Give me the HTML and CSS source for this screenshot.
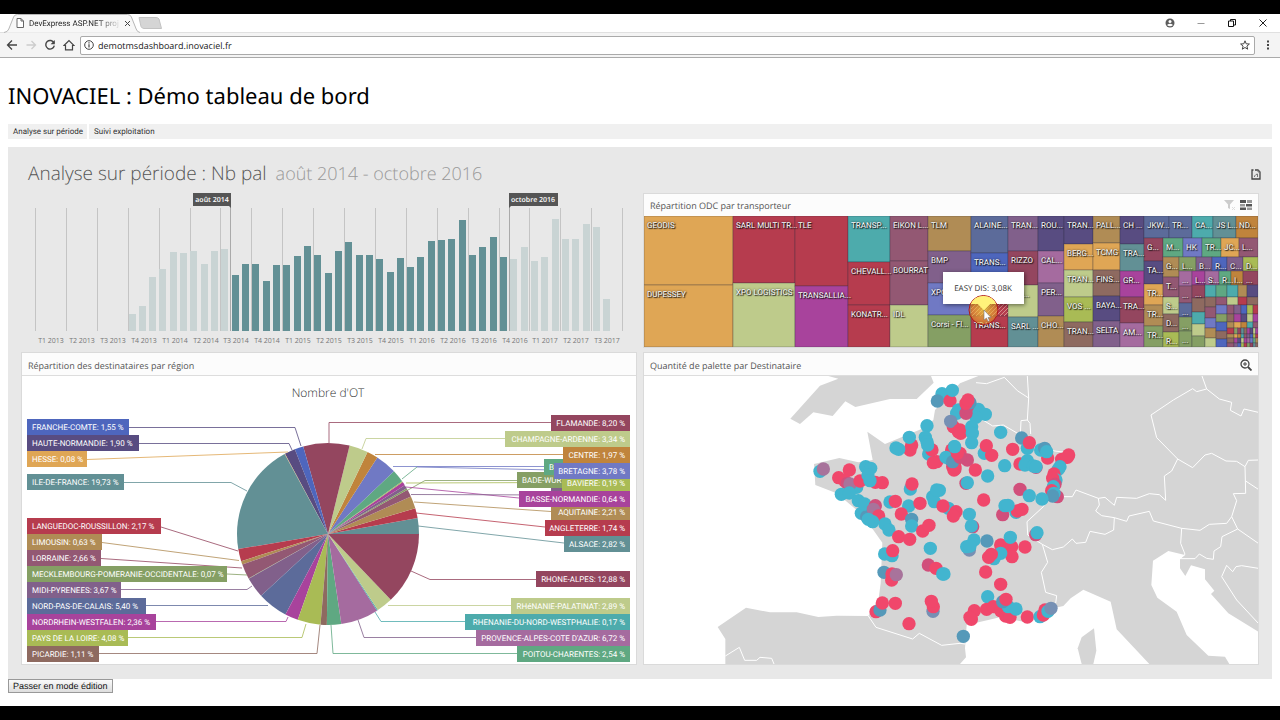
FILE: index.html
```html
<!DOCTYPE html>
<html lang="fr">
<head>
<meta charset="utf-8">
<title>DevExpress ASP.NET project</title>
<link rel="stylesheet" href="styles.css">
</head>
<body>
<header class="browser">
  <div class="tab-strip">
    <div class="tab">
      <svg class="tab-shape" viewBox="0 0 142 19" preserveAspectRatio="none" aria-hidden="true"><path d="M0 18.500 Q4 18 5 15L10 3Q11 .5 14 .5H129Q132 .5 133 3L138 15Q139 18 142 18.500" fill="#f7f7f7" stroke="#b4b4b4"/></svg>
      <svg class="icon-page" viewBox="0 0 8 10" aria-hidden="true"><path d="M1 .5H5L7.500 3V9.500H1ZM5 .5V3H7.500" fill="#fff" stroke="#666"/></svg>
      <span class="tab-title">DevExpress ASP.NET proj</span>
      <button class="tab-close" aria-label="Fermer l'onglet"><svg viewBox="0 0 7 7"><path d="M1 1L6 6M6 1L1 6" stroke="#444"/></svg></button>
    </div>
    <svg class="new-tab" viewBox="0 0 24 12" aria-hidden="true"><path d="M1 .5H18Q20 .5 21 2L23.500 11.500H6Q4 11.500 3 9.500Z" fill="#d5d5d5" stroke="#c2c2c2"/></svg>
    <div class="window-buttons">
      <button aria-label="Profil"><svg viewBox="0 0 10 10"><circle cx="5" cy="5" r="4.500" fill="#5c5c5c"/><circle cx="5" cy="3.500" r="1.500" fill="#fff"/><path d="M2 7Q5 4.600 8 7Q5 9.600 2 7" fill="#fff"/></svg></button>
      <button aria-label="Réduire"><svg viewBox="0 0 10 10"><path d="M1.500 5.500H8.500" stroke="#999"/></svg></button>
      <button aria-label="Restaurer"><svg viewBox="0 0 10 10"><path d="M1.500 3H6.500V8.500H1.500ZM3.500 3V1.500H8.500V7H6.500" fill="none" stroke="#111"/></svg></button>
      <button aria-label="Fermer"><svg viewBox="0 0 10 10"><path d="M1.500 1.500L8.500 8.500M8.500 1.500L1.500 8.500" stroke="#222"/></svg></button>
    </div>
  </div>
  <div class="toolbar">
    <button aria-label="Précédent"><svg viewBox="0 0 12 12"><path d="M11 6H2M6 1.500L1.500 6L6 10.500" fill="none" stroke="#444" stroke-width="1.300"/></svg></button>
    <button aria-label="Suivant"><svg viewBox="0 0 12 12"><path d="M1.500 6H10M6.500 2L10.500 6L6.500 10" fill="none" stroke="#ccc" stroke-width="1.300"/></svg></button>
    <button aria-label="Actualiser"><svg viewBox="0 0 12 12"><path d="M10 4A4.300 4.300 0 1 0 10.300 6.600" fill="none" stroke="#444" stroke-width="1.400"/><path d="M10.800 1V5.200H6.600Z" fill="#444"/></svg></button>
    <button aria-label="Accueil"><svg viewBox="0 0 12 12"><path d="M1 6.500L6 1.500L11 6.500H9.500V10.800H2.500V6.500Z" fill="none" stroke="#444" stroke-width="1.200"/></svg></button>
    <div class="address">
      <svg viewBox="0 0 10 10" aria-hidden="true"><circle cx="5" cy="5" r="4.300" fill="none" stroke="#444"/><path d="M5 4.300V7.600M5 2.300V3.400" stroke="#444" stroke-width="1.200"/></svg>
      <input type="text" aria-label="Adresse" value="demotmsdashboard.inovaciel.fr">
      <svg viewBox="0 0 10 10" aria-hidden="true"><path d="M5 .8L6.200 3.800L9.400 4L6.900 6.100L7.700 9.200L5 7.500L2.300 9.200L3.100 6.100L.6 4L3.800 3.800Z" fill="none" stroke="#444"/></svg>
    </div>
    <button aria-label="Menu"><svg viewBox="0 0 12 12"><path d="M5 1.500H7V3.500H5ZM5 5H7V7H5ZM5 8.500H7V10.500H5Z" fill="#444"/></svg></button>
  </div>
</header>
<main class="page">
  <h1>INOVACIEL : Démo tableau de bord</h1>
  <nav class="tabs"><button>Analyse sur période</button><button>Suivi exploitation</button></nav>
  <section class="dashboard">
    <div class="dash-title">
      <h2>Analyse sur période : Nb pal <span>août 2014 - octobre 2016</span></h2>
      <button aria-label="Exporter"><svg viewBox="0 0 10 11"><path d="M2.500 1H1V10H9V3L7 1H4" fill="none" stroke="#444" stroke-width="1.300"/><path d="M7 1V3H9M3.500 8V7L5 5.500L6.500 5V8" fill="none" stroke="#777"/></svg></button>
    </div>
    <div class="grid">
      <svg class="range chart" id="range" viewBox="22 194 614 153" role="img" aria-label="Nb pal par mois"></svg>
      <article class="panel">
        <header><h3>Répartition ODC par transporteur</h3>
          <button aria-label="Effacer le filtre"><svg viewBox="0 0 12 12"><path d="M0 1H10L6 5.500V10L4 9V5.500Z" fill="#ccc"/><path d="M8 8L11 11M11 8L8 11" stroke="#ddd"/></svg></button>
          <button aria-label="Sélection"><svg viewBox="0 0 12 12"><path d="M0 1H6V4H0ZM6 5H12V7.500H6ZM0 8.500H6V11H0Z" fill="#555"/><path d="M7 1H12V4H7ZM0 5H5V7.500H0ZM7 8.500H12V11H7Z" fill="#999"/></svg></button>
        </header>
        <svg class="chart treemap" id="treemap" viewBox="644 216 614 131" role="img" aria-label="Répartition ODC par transporteur"></svg>
      </article>
      <article class="panel">
        <header class="lined"><h3>Répartition des destinataires par région</h3></header>
        <svg class="chart pie" id="pie" viewBox="22 376 614 288" role="img" aria-label="Nombre d'OT par région"></svg>
      </article>
      <article class="panel">
        <header class="lined"><h3>Quantité de palette par Destinataire</h3>
          <button aria-label="Zoom initial"><svg viewBox="0 0 12 12"><circle cx="5" cy="5" r="4" fill="none" stroke="#444" stroke-width="1.300"/><path d="M8 8L11.500 11.500" stroke="#444" stroke-width="1.800"/><path d="M3 5H7M5 3V7" stroke="#444"/></svg></button>
        </header>
        <svg class="chart map" id="map" viewBox="12 78 1842 864" role="img" aria-label="Carte des destinataires"></svg>
      </article>
    </div>
  </section>
  <button class="edit-mode">Passer en mode édition</button>
</main>
<script src="charts.js"></script>
</body>
</html>
```

FILE: styles.css
```css
* { box-sizing: border-box; }
body {
  margin: 0;
  min-height: 100vh;
  display: flex;
  flex-direction: column;
  padding: 14px 0;
  background: #000;
  color: #333;
  font-family: "Open Sans", "Noto Sans", sans-serif;
  font-size: 8px;
  text-rendering: geometricPrecision;
}
button { font: inherit; color: inherit; border: 0; background: none; padding: 0; text-rendering: inherit; }
svg { display: block; flex: none; }
h1, h2, h3 { margin: 0; font-weight: 400; }

.browser { background: #fff; }
.tab-strip { display: flex; align-items: center; height: 19px; padding-left: 4px; border-bottom: 1px solid #e0e0e0; }
.tab { position: relative; display: flex; align-items: center; width: 136px; height: 19px; padding: 0 10px 0 12px; gap: 5px; font-family: Roboto, "Open Sans", sans-serif; }
.tab-shape { position: absolute; inset: 0; width: 100%; height: 100%; }
.icon-page { position: relative; width: 8px; height: 10px; }
.tab-title {
  position: relative; flex: 1; white-space: nowrap;
  background: linear-gradient(to right, #222 75%, #ddd);
  -webkit-background-clip: text; background-clip: text; color: transparent;
}
.tab-close { position: relative; }
.tab-close svg { width: 7px; height: 7px; }
.new-tab { width: 24px; height: 12px; margin-left: -2px; }
.window-buttons { margin-left: auto; display: flex; gap: 21px; padding-right: 12px; }
.window-buttons svg { width: 10px; height: 10px; }
.toolbar { display: flex; align-items: center; gap: 7px; height: 25px; padding: 0 6px; background: #f4f4f4; border-bottom: 1px solid #aaa; }
.toolbar svg { width: 12px; height: 12px; }
.address { flex: 1; display: flex; align-items: center; height: 19px; margin-left: -2px; padding: 0 4px 0 3px; gap: 4px; background: #fff; border: 1px solid #aaa; border-radius: 2px; }
.toolbar .address svg { width: 10px; height: 10px; }
.address input { flex: 1; border: 0; padding: 0; background: none; font: 9px "Open Sans", sans-serif; color: #222; text-rendering: inherit; }

.page { flex: 1; padding: 22px 8px 12px; background: #fff; }
h1 { font: 22px/32px "Noto Sans", sans-serif; color: #000; }
.tabs { display: flex; height: 15px; margin-top: 12px; background: #f0f0f0; font-family: Roboto, "Open Sans", sans-serif; }
.tabs button { padding: 0 4px 0 5px; }
.tabs button + button { border-left: 2px solid #fff; }
.dashboard { margin-top: 8px; padding: 0 14px 15px; background: #e8e8e8; }
.dash-title { display: flex; align-items: center; height: 47px; padding: 8px 0 0 6px; }
.dash-title h2 { flex: 1; font-size: 19px; line-height: 28px; font-weight: 300; color: #555; padding-bottom: 2px; }
.dash-title span { font-size: 18px; color: #999; margin-left: 4px; }
.dash-title svg { width: 10px; height: 11px; margin-right: -3px; }
.grid { display: grid; grid-template-columns: 1fr 1fr; gap: 6px 8px; }
.panel { background: #fff; box-shadow: 0 0 0 1px #dadada; }
.panel header { display: flex; align-items: center; gap: 4px; height: 22px; padding: 0 6px; background: #fcfcfc; }
.panel header.lined { height: 23px; padding-top: 2px; border-bottom: 1px solid #ddd; }
.panel h3 { flex: 1; font-size: 9px; color: #555; }
.panel header svg { width: 12px; height: 12px; }
.chart { width: 100%; height: auto; }
.range { overflow: visible; }
.chart text { font-size: 8px; fill: #fff; }
.range .axis { font-size: 7px; fill: #777; text-anchor: middle; }
.range .flag { font-size: 7px; font-weight: 600; text-anchor: middle; }
.range .grid-line { stroke: #c4c4c4; }
.range .handle { stroke: #aaa; }
.treemap .tile { stroke: rgba(40, 40, 60, .3); stroke-width: 1; }
.treemap .label { font-family: Roboto, "Open Sans", sans-serif; text-shadow: 1px 1px 1px #111, 0 0 2px #222; }
.treemap .tip { filter: drop-shadow(1px 1px 2px rgba(0, 0, 0, .5)); }
.treemap .tip-text { fill: #333; text-anchor: middle; }
.pie text { font-family: Roboto, "Open Sans", sans-serif; }
.pie .caption { font-family: "Open Sans", sans-serif; font-size: 12px; font-weight: 300; fill: #333; text-anchor: middle; }
.pie .leader { fill: none; stroke-width: 1; stroke-opacity: .8; }
.pie .end { text-anchor: end; }
.map .land { fill: #d5d5d5; }
.map .border { fill: none; stroke: #fff; stroke-width: 3; }
.edit-mode {
  display: block; height: 14px; padding: 0 4px; border: 1px solid #999;
  background: linear-gradient(#fafafa, #dedede); color: #111;
  font: 9px/12px "Liberation Sans", sans-serif;
}
```

FILE: charts.js
```javascript
const C = {
  teal: '#629095', red: '#b63c4e', gold: '#b08c55', mauve: '#935873', green: '#859f64',
  purple: '#81608b', blue: '#5c6b9a', magenta: '#a8439c', lime: '#a9bb55', brown: '#8e6a60',
  mint: '#5fa882', orchid: '#a56b9f', cyan: '#4dabac', pale: '#becb8b', maroon: '#94465f',
  indigo: '#7079c4', rust: '#c0843c', orange: '#dfa655', night: '#584c81', royal: '#4e66bd'
};
const put = (id, html) => { document.getElementById(id).innerHTML = html; };

/* Range selector: one bar per month */
(function () {
  const tops = [314,306,277,269,252,253,251,264,251,249,275,264,264,281,265,265,256,246,255,273,
    251,242,255,255,259,272,258,267,257,241,240,239,220,255,247,237,257,259,247,261,257,219,239,239,224,227,299];
  let s = '';
  const quarters = [];
  for (let y = 2013; y < 2018; y++) for (let q = 1; q < 5; q++) quarters.push(`T${q} ${y}`);
  quarters.pop();
  for (let i = 0; i <= quarters.length; i++) {
    const x = Math.round(35 + i * 30.9) + 0.5;
    s += `<line class="grid-line" x1="${x}" x2="${x}" y1="208" y2="331"/>`;
    if (quarters[i]) s += `<text class="axis" x="${x + 15.5}" y="343">${quarters[i]}</text>`;
  }
  tops.forEach((t, i) => {
    const on = i > 9 && i < 37;
    s += `<rect x="${Math.round(128.5 + i * 10.32)}" y="${t}" width="7" height="${331 - t}" fill="${on ? C.teal : '#c9d4d4'}"/>`;
  });
  s += `<line class="handle" x1="230.5" x2="230.5" y1="206" y2="331"/><line class="handle" x1="509.5" x2="509.5" y1="206" y2="331"/>
    <path d="M193 193H231V208L229 206H193Z" fill="#555"/><text class="flag" x="212" y="202">août 2014</text>
    <path d="M509 193H558V206H511L509 208Z" fill="#555"/><text class="flag" x="533" y="202">octobre 2016</text>`;
  put('range', s);
})();

/* Treemap: columns of [x0, x1, bottom, [y0, colour, label]...] */
(function () {
  const cols = [
    [644, 733, 347, [216, 'orange', 'GEODIS'], [285, 'orange', 'DUPESSEY']],
    [733, 795, 347, [216, 'red', 'SARL MULTI TR...'], [283, 'pale', 'XPO LOGISTICS']],
    [795, 848, 347, [216, 'red', 'TLE'], [286, 'magenta', 'TRANSALLIA...']],
    [848, 890, 347, [216, 'cyan', 'TRANSP...'], [262, 'red', 'CHEVALL...'], [305, 'red', 'KONATR...']],
    [890, 928, 347, [216, 'mauve', 'EIKON L...'], [261, 'mauve', 'BOURRAT'], [305, 'pale', 'IDL']],
    [928, 971, 347, [216, 'gold', 'TLM'], [251, 'purple', 'BMP'], [283, 'indigo', 'XPO'], [315, 'green', 'Corsi - Fl...']],
    [971, 1008, 347, [216, 'blue', 'ALAINE...'], [253, 'royal', 'TRANS...'], [285, 'red', ''], [316, 'red', 'TRANS...']],
    [1008, 1038, 347, [216, 'purple', 'TRAN...'], [251, 'maroon', 'RIZZO'], [285, 'pale', 'PRI...'], [317, 'teal', 'SARL ...']],
    [1038, 1064, 347, [216, 'night', 'ROU...'], [251, 'orchid', 'CAL...'], [283, 'purple', 'PER...'], [316, 'gold', 'CHO...']],
    [1064, 1093, 347, [216, 'night', 'TRAN...'], [244, 'orange', 'BERG...'], [270, 'pale', 'TRAN...'], [297, 'lime', 'VOS ...'], [322, 'brown', 'TRAN...']],
    [1093, 1120, 347, [216, 'gold', 'PALL...'], [243, 'orange', 'TCMG'], [270, 'brown', 'FINS...'], [296, 'night', 'BAYA...'], [321, 'purple', 'SELTA']],
    [1120, 1144, 347, [216, 'night', 'CH ...'], [244, 'teal', 'TRA...'], [271, 'magenta', 'GR...'], [297, 'maroon', 'TRA...'], [323, 'orchid', 'AM...']],
    [1144, 1169, 238, [216, 'blue', 'JKW...']], [1169, 1192, 238, [216, 'blue', 'TR...']],
    [1192, 1213, 238, [216, 'cyan', 'CA...']], [1213, 1236, 238, [216, 'teal', 'JS L...']], [1236, 1258, 238, [216, 'rust', 'ND...']],
    [1144, 1163, 347, [238, 'maroon', 'G...'], [261, 'night', 'TA...'], [284, 'orange', 'TR...'], [305, 'gold', 'TR...'], [326, 'green', 'TR...']],
    [1163, 1183, 257, [238, 'mint', 'M...']], [1183, 1202, 257, [238, 'indigo', 'HK']], [1202, 1221, 257, [238, 'mint', 'TR...']],
    [1221, 1239, 257, [238, 'orange', 'JC...']], [1239, 1258, 257, [238, 'mauve', 'L...']],
    [1163, 1179, 347, [257, 'gold', 'G...'], [277, 'mauve', 'T...'], [297, 'pale', 'S...'], [314, 'brown', 'D...'], [332, 'lime', 'R...']],
    [1179, 1196, 271, [257, 'green', 'L...']], [1196, 1212, 271, [257, 'purple', 'B...']], [1212, 1227, 271, [257, 'royal', 'R...']],
    [1227, 1243, 271, [257, 'purple', 'C...']], [1243, 1258, 271, [257, 'lime', 'D...']],
    [1179, 1192, 347, [271, 'orchid', '...'], [286, 'mauve', '...'], [303, 'blue', '...'], [317, 'green', '...'], [331, 'green', '...']],
    [1192, 1205, 347, [271, 'magenta', 'L...'], [285, 'maroon', '...'], [298, 'brown', ''], [312, 'cyan', ''], [324, 'pale', ''], [336, 'green', '']],
    [1205, 1219, 285, [271, 'orchid', 'S...']], [1219, 1231, 285, [271, 'mint', 'R...']], [1231, 1243, 285, [271, 'rust', 'I...']], [1243, 1258, 285, [271, 'maroon', '...']],
    [1205, 1216, 347, [285, 'cyan', ''], [297, 'brown', ''], [307, 'mauve', ''], [318, 'indigo', ''], [328, 'gold', ''], [338, 'pale', '']],
    [1216, 1227, 347, [285, 'mint', ''], [297, 'mauve', ''], [305, 'indigo', ''], [314, 'green', ''], [322, 'royal', ''], [331, 'brown', ''], [339, 'royal', '']],
    [1227, 1238, 305, [285, 'cyan', ''], [297, 'pale', '']],
    [1238, 1247, 305, [285, 'gold', ''], [297, 'red', '']],
    [1247, 1258, 305, [285, 'night', ''], [297, 'brown', '']]
  ];
  let s = '<defs><pattern id="hatch" width="4" height="4" patternUnits="userSpaceOnUse"><path d="M-1 5L5 -1M-1 1L1 -1M3 5L5 3" stroke="#d88c8c" stroke-width="1"/></pattern><radialGradient id="glow"><stop offset="0" stop-color="#ffee40" stop-opacity=".9"/><stop offset="1" stop-color="#e8a020" stop-opacity=".65"/></radialGradient></defs>';
  const tile = (x, y, w, h, c) => `<rect class="tile" x="${x}" y="${y}" width="${w}" height="${h}" fill="${c}"/>`;
  let labels = '';
  cols.forEach(([x0, x1, end, ...cells]) => cells.forEach(([y, c, t], i) => {
    const y1 = i + 1 < cells.length ? cells[i + 1][0] : end;
    s += tile(x0, y, x1 - x0, y1 - y, C[c]);
    if (t) labels += `<text class="label" x="${x0 + 3}" y="${y + 12}">${t}</text>`;
  }));
  /* the smallest carriers share the lower right corner */
  const names = ['mauve','lime','maroon','magenta','magenta','mint','rust','purple','red','teal','night','orchid','gold','cyan','royal','green','brown','pale','indigo','orange'];
  const xs = [1227, 1234, 1241, 1247, 1253, 1258];
  const ys = [305, 314, 322, 328, 334, 338, 343, 347];
  let n = 0;
  for (let r = 0; r < 7; r++) for (let c = 0; c < 5; c++) {
    const w = xs[c + 1] - xs[c], h = ys[r + 1] - ys[r];
    const parts = r > 2 && c > 0 ? 2 : 1;
    for (let k = 0; k < parts; k++) s += tile(xs[c] + k * w / parts, ys[r], w / parts, h, C[names[(n++ * 7 + r) % 20]]);
  }
  s += '<rect x="971" y="285" width="37" height="31" fill="url(#hatch)"/>' + labels;
  s += `<path class="tip" d="M943 272H1024V304H990L984 310L978 304H943Z" fill="#fff"/><text class="tip-text" x="983" y="291">EASY DIS: 3,08K</text>
    <circle cx="983.500" cy="310" r="14.500" fill="url(#glow)" fill-opacity=".75" stroke="#b01818"/><path d="M971 304Q974 296 983.500 296T996 304H990L984 310L978 304Z" fill="#fff27a"/>
    <path d="M984 310V320L986.500 318L988 321.500L989.500 320.500L988 317.500H991Z" fill="#fff" stroke="#777" stroke-width=".6"/>`;
  put('treemap', s);
})();

/* Pie: slices run counter-clockwise from east */
(function () {
  const slices = [[2.82,'teal'],[1.74,'red'],[2.21,'gold'],[1.3,'mauve'],[.3,'green'],[.65,'purple'],[.64,'magenta'],[.19,'lime'],[2.25,'mint'],
    [3.78,'indigo'],[1.97,'rust'],[3.34,'pale'],[8.2,'maroon'],[1.55,'royal'],[1.9,'night'],[.08,'orange'],[19.73,'teal'],[2.17,'red'],
    [.63,'gold'],[2.66,'mauve'],[.07,'green'],[3.67,'purple'],[5.4,'blue'],[2.36,'magenta'],[4.08,'lime'],[1.11,'brown'],[2.54,'mint'],
    [6.72,'orchid'],[.17,'cyan'],[2.89,'pale'],[12.88,'maroon']];
  const total = slices.reduce((a, b) => a + b[0], 0);
  const cx = 328, cy = 534, r = 91;
  const pt = a => `${(cx + r * Math.cos(a)).toFixed(2)} ${(cy - r * Math.sin(a)).toFixed(2)}`;
  let a = 0, s = '<text class="caption" x="328" y="397">Nombre d\'OT</text>';
  slices.forEach(([v, c]) => {
    const b = a + v / total * 2 * Math.PI;
    s += `<path d="M${cx} ${cy}L${pt(a)}A${r} ${r} 0 0 0 ${pt(b)}Z" fill="${C[c]}"/>`;
    a = b;
  });
  const leaders = [
    ['night','129,427.500 295,427.500 301,446'],['night','139,443.500 289,443.500 292,450'],['orange','87,459.500 288,452'],
    ['teal','124,482.500 231,482.500 247,491'],['maroon','161,527 238,551'],['gold','102,542.500 239,560.500'],['maroon','101,558.500 242,568'],
    ['green','227,574 247,575'],['purple','121,589.500 247,589.500 252,586'],['blue','146,605.500 268,605.500'],['magenta','156,621.500 286,621.500 288,617'],
    ['lime','128,637.500 302,637.500 306,624'],['brown','99,653.500 317,653.500 320,625'],
    ['maroon','329,443 329,422.500 551,422.500'],['pale','362,449 366,438.500 505,438.500'],['rust','375,454.500 563,454.500'],
    ['indigo','393,466.500 544,466.500'],['indigo','417,467 554,470'],['mint','402,479 417,467'],['lime','406,483 562,482.500'],['green','408,490 425,480.500 517,480.500'],
    ['magenta','406,487 519,498'],['purple','411,494.500 551,495'],['gold','414,502 551,511.500'],['red','416,513 545,527'],['teal','418,526 564,543'],
    ['maroon','411,571 430,579.500 536,579.500'],['pale','388,605.500 511,605.500'],['cyan','375,612 381,621.500 465,621.500'],
    ['purple','358,620 364,637.500 476,637.500'],['mint','331,625 333,653.500 517,653.500']];
  leaders.forEach(([c, p]) => { s += `<polyline class="leader" points="${p}" stroke="${C[c]}"/>`; });
  const left = [['FRANCHE-COMTE: 1,55 %','royal',419,102],['HAUTE-NORMANDIE: 1,90 %','night',435,112],['HESSE: 0,08 %','orange',451,60],
    ['ILE-DE-FRANCE: 19,73 %','teal',474,97],['LANGUEDOC-ROUSSILLON: 2,17 %','red',518,134],['LIMOUSIN: 0,63 %','gold',534,75],
    ['LORRAINE: 2,66 %','mauve',550,74],['MECKLEMBOURG-POMERANIE-OCCIDENTALE: 0,07 %','green',566,200],['MIDI-PYRENEES: 3,67 %','purple',582,94],
    ['NORD-PAS-DE-CALAIS: 5,40 %','blue',598,119],['NORDRHEIN-WESTFALEN: 2,36 %','magenta',614,129],['PAYS DE LA LOIRE: 4,08 %','lime',630,101],['PICARDIE: 1,11 %','brown',646,72]];
  left.forEach(([t, c, y, w]) => { s += `<rect x="27" y="${y}" width="${w}" height="16" fill="${C[c]}"/><text x="32" y="${y + 11}">${t}</text>`; });
  s += `<rect x="517" y="472" width="113" height="16" fill="${C.green}"/><text x="522" y="483">BADE-WUR</text>
    <rect x="544" y="459" width="86" height="16" fill="${C.mint}"/><text x="549" y="470">B</text>
    <rect x="551" y="488" width="79" height="6" fill="${C.purple}"/>`;
  const right = [['ALSACE: 2,82 %','teal',536,564],['ANGLETERRE: 1,74 %','red',520,545],['AQUITAINE: 2,21 %','gold',504,551],
    ['BAVIERE: 0,19 %','lime',475,562],['BASSE-NORMANDIE: 0,64 %','magenta',491,519],['BRETAGNE: 3,78 %','indigo',463,554],['CENTRE: 1,97 %','rust',447,563],
    ['CHAMPAGNE-ARDENNE: 3,34 %','pale',431,505],['FLAMANDE: 8,20 %','maroon',415,551],['RHONE-ALPES: 12,88 %','maroon',571,536],
    ['RHéNANIE-PALATINAT: 2,89 %','pale',598,511],['RHENANIE-DU-NORD-WESTPHALIE: 0,17 %','cyan',614,465],
    ["PROVENCE-ALPES-COTE D'AZUR: 6,72 %",'orchid',630,476],['POITOU-CHARENTES: 2,54 %','mint',646,517]];
  right.forEach(([t, c, y, x]) => { s += `<rect x="${x}" y="${y}" width="${630 - x}" height="16" fill="${C[c]}"/><text class="end" x="625" y="${y + 11}">${t}</text>`; });
  put('pie', s);
})();

/* Map of deliveries */
(function () {
  const land = ['1015,78 960,100 885,180 880,210 850,235 735,282 682,245 698,330 655,337 598,324 522,342 526,405 590,430 650,480 700,540 727,578 722,700 716,745 685,798 590,797 535,801 470,787 390,787 318,773 233,831 256,867 256,942 960,942 978,922 975,895 980,825 1080,802 1150,815 1240,775 1270,768 1292,745 1330,719 1412,755 1430,838 1528,942 1768,942 1755,920 1705,917 1640,855 1610,785 1552,743 1534,705 1539,632 1585,603 1635,615 1620,628 1620,655 1636,678 1653,646 1695,658 1695,688 1723,722 1713,732 1765,790 1855,845 1855,78',
    '1362,835 1325,862 1313,895 1325,942 1360,942 1369,902',
    '565,78 595,86 540,107 451,206 480,222 520,187 578,198 616,154 646,171 750,147 830,147 881,98 873,78'];
  const borders = ['108,38 140,41 193,22 232,62 266,84 262,150 270,160 272,192','262,18 266,84','262,150 243,152 241,195',
    '80,120 158,168 190,165 241,195 300,235 345,243 400,250 345,330 330,380 345,380 397,380 408,360 475,385 495,382 523,406 530,382 590,385 628,371 658,374 677,391 673,318 695,303 713,267 650,203 633,135 700,90 758,56 770,65 800,57 786,18',
    '800,57 838,87 875,97 871,121 903,138 912,117 955,127','713,267 758,293 795,255 815,250 858,273 890,274 915,290 925,271 955,270',
    '915,290 917,370 880,371 890,392 875,440 860,460 808,463 780,481 725,475 640,453 628,424 567,438 560,454 523,443 485,437 467,423 478,405 475,385',
    '523,443 521,480 495,493 450,484 437,517 408,520 397,507 370,531 337,539 307,523 263,495 261,455 310,410 330,380',
    '307,523 323,577 304,607 317,667 350,677 347,700','725,475 722,520 735,553 720,566 765,566 778,552 800,565 820,568 822,543 842,530 846,500 893,477 875,440',
    '893,477 955,520','917,333 955,358','955,595 905,587 888,590 878,605 860,586 845,620 890,690 955,760',
    '-215,738 -192,772 -82,807 -62,790 5,826 60,820 75,822','-644,858 -602,832 -586,871 -550,871 -540,862 -505,865 -498,882'];
  const B = '#42b5cf', R = '#f0476b', M = '#a8739b', S = '#7690b4', D = '#5599b9', P = '#d14f7b';
  const west = [[B,906,131],[D,892,153],[R,930,152],[B,937,121],[B,950,190],[R,940,230],[S,932,214],[R,955,245],[B,861,227],[R,815,285],[R,810,300],[B,808,262],[B,768,294],[B,776,298],
    [B,866,312],[R,876,300],[B,856,262],[B,861,275],[B,863,285],[R,890,335],[R,880,338],[B,925,322],[R,938,350],[P,945,357],[R,935,310],[D,930,328],[B,943,290],
    [B,540,364],[M,550,357],[R,596,383],[R,628,360],[R,614,392],[P,622,400],[B,650,412],[M,630,402],[R,660,393],[R,706,397],[R,727,398],[B,677,350],[B,692,355],[B,684,375],[B,690,392],
    [B,604,433],[B,628,429],[B,655,452],[P,690,480],[B,664,490],[D,680,500],[B,674,462],[P,706,467],[M,700,478],[R,716,498],[B,698,515],[B,685,508],[B,735,522],[B,747,540],
    [B,750,456],[R,766,454],[B,811,417],[R,816,402],[B,806,468],[R,840,460],[R,784,492],[D,815,508],[B,815,528],[B,898,421],[B,878,440],[B,883,455],[B,925,475],[R,909,468],[R,948,485],[R,940,498],
    [R,776,560],[R,809,568],[R,848,543],[R,867,526],[B,734,612],[B,756,617],[R,758,602],[B,871,595],[D,732,667],[R,755,690],[R,756,672],[M,769,674],[P,865,645],[R,888,655],[B,908,672],
    [R,708,785],[D,720,780],[R,727,759],[R,766,760],[S,879,784],[R,880,770],[R,874,754],[R,807,821]];
  const east = [[B,55,120],[B,115,118],[B,136,133],[B,108,142],[P,78,130],[P,82,110],[D,90,98],[R,78,100],[R,84,90],[R,60,180],[R,62,190],[B,95,170],[B,97,190],[B,95,218],
    [R,35,240],[R,60,250],[B,18,262],[P,82,270],[P,40,285],[R,42,300],[R,45,290],[D,38,275],[P,60,262],[R,52,250],[B,44,230],[B,182,187],[B,133,250],[R,155,256],[R,139,227],[R,218,238],[D,245,204],[B,262,235],[R,268,218],
    [R,106,300],[B,143,318],[P,78,340],[B,82,338],[B,194,287],[R,240,282],[B,262,272],[B,255,285],[P,288,292],[B,280,288],[B,288,290],[R,323,264],[B,302,240],[D,314,235],[B,320,245],
    [R,365,268],[R,386,255],[R,382,262],[B,360,290],[B,355,298],[R,342,312],[B,348,330],[R,338,325],[P,345,343],[B,340,350],[R,335,362],[P,352,380],[B,342,370],[D,338,378],
    [R,131,390],[P,240,358],[B,268,377],[B,306,387],[P,188,434],[B,228,427],[R,232,423],[R,246,418],[B,195,407],[B,204,406],[B,88,433],[P,98,470],[B,94,468],[B,-10,360],
    [B,102,510],[S,88,540],[B,80,530],[B,90,528],[D,141,513],[P,287,494],[B,291,488],[R,255,531],[R,182,525],[R,200,540],[R,215,530],[R,216,560],[B,182,550],[B,162,566],[R,154,553],[R,146,562],[B,211,502],
    [R,137,606],[B,12,612],[R,182,643],[B,143,680],[R,103,722],[R,94,748],[R,90,742],[R,140,718],[R,160,710],[R,182,722],[R,197,738],[R,210,742],[B,205,710],[D,188,695],[R,198,688],[B,228,717],
    [R,262,741],[B,300,740],[R,310,735],[R,315,720],[B,324,724],[S,333,715],[D,70,799]];
  const dots = list => list.map(([c, x, y]) => `<circle cx="${x}" cy="${y}" r="20" fill="${c}"/>`).join('');
  put('map', land.map(p => `<polygon class="land" points="${p}"/>`).join('') +
    `<g transform="translate(900 60)">${borders.map(p => `<polyline class="border" points="${p}"/>`).join('')}</g>` +
    dots(west) + `<g transform="translate(900 60)">${dots(east)}</g>`);
})();
```
